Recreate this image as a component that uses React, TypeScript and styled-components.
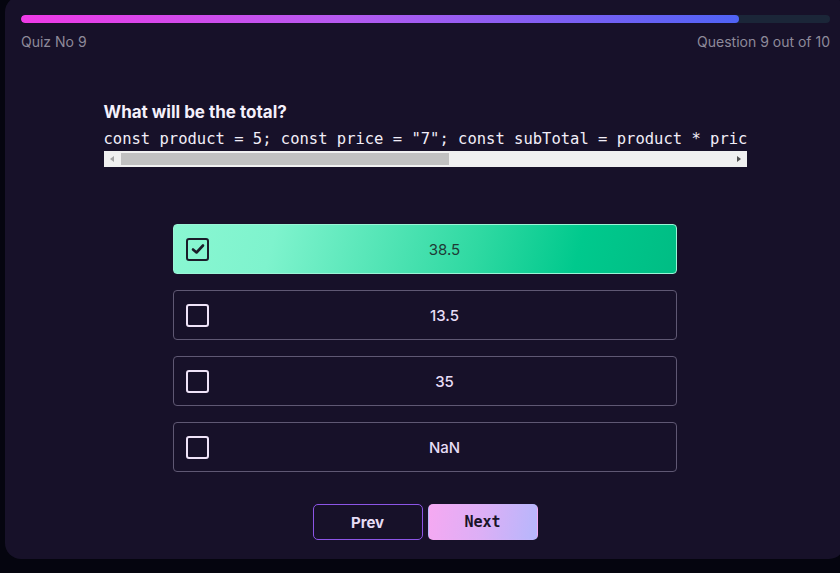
import React from "react";
import styled, { createGlobalStyle } from "styled-components";

const Global = createGlobalStyle`
  html, body { margin: 0; padding: 0; background: #05050f; overflow: hidden; }
  body { font-family: Inter, "Noto Sans", sans-serif; }
  * { box-sizing: border-box; }
`;

const Card = styled.div`
  margin-left: 5px;
  margin-top: -4px;
  width: 840px;
  height: 563px;
  background: #171129;
  border-radius: 16px;
  padding: 19px 15px 0 15px;
  display: flex;
  flex-direction: column;
  align-items: stretch;
`;

const Track = styled.div`
  height: 8px;
  margin-left: 1px;
  border-radius: 4px;
  background: #1b2638;
  overflow: hidden;
`;

const Fill = styled.div`
  height: 100%;
  border-radius: 4px;
  background: linear-gradient(90deg, #ee3ae6 0%, #b55af0 45%, #4f63f5 100%);
`;

const Header = styled.div`
  display: flex;
  justify-content: space-between;
  margin-top: 9px;
  padding-left: 1px;
  font-size: 14px;
  line-height: 20px;
  color: #8e8a9a;
`;

const Question = styled.div`
  width: 643px;
  align-self: center;
  margin-top: 50px;
`;

const Title = styled.div`
  font-size: 17px;
  font-weight: 700;
  line-height: 20px;
  color: #f4f0fb;
`;

const Code = styled.pre`
  margin: 7px 0 0 0;
  padding-bottom: 2px;
  font-family: "DejaVu Sans Mono", monospace;
  font-size: 15.5px;
  line-height: 20px;
  color: #f2eef8;
  overflow: hidden;
  white-space: pre;
`;

const ScrollBar = styled.div`
  height: 16px;
  background: #f0f0f0;
  display: flex;
  align-items: center;
`;

const Arrow = styled.div<{ $dir: "left" | "right"; $active?: boolean }>`
  width: 16px;
  height: 16px;
  flex: none;
  display: flex;
  align-items: center;
  justify-content: center;
  &::before {
    content: "";
    width: 0;
    height: 0;
    border-top: 3.5px solid transparent;
    border-bottom: 3.5px solid transparent;
    ${(p) =>
      p.$dir === "left"
        ? `border-right: 4px solid ${p.$active ? "#505050" : "#a3a3a3"};`
        : `border-left: 4px solid ${p.$active ? "#505050" : "#a3a3a3"};`}
  }
`;

const ThumbArea = styled.div`
  flex: 1;
  height: 100%;
  padding: 2px 1px;
  display: flex;
`;

const Thumb = styled.div`
  height: 100%;
  background: #c1c1c1;
`;

const Options = styled.div`
  width: 504px;
  align-self: center;
  margin-top: 57px;
  display: flex;
  flex-direction: column;
  gap: 16px;
`;

const Option = styled.div<{ $selected?: boolean }>`
  height: 50px;
  border-radius: 4px;
  border: 1px solid ${(p) => (p.$selected ? "#9af5d6" : "#5f5873")};
  background: ${(p) =>
    p.$selected
      ? "linear-gradient(105deg, #8af7d2 0%, #7ef3cd 20%, #2fd9a2 60%, #00c98d 80%, #00bd84 100%)"
      : "transparent"};
  display: grid;
  grid-template-columns: 23px 1fr;
  align-items: center;
  padding-left: 12px;
`;

const Box = styled.div<{ $selected?: boolean }>`
  width: 23px;
  height: 23px;
  border-radius: 3px;
  border: 2.5px solid ${(p) => (p.$selected ? "#1b1c2a" : "#efe3f8")};
  display: flex;
  align-items: center;
  justify-content: center;
`;

const Label = styled.div<{ $selected?: boolean }>`
  margin-left: 4px;
  text-align: center;
  font-size: 15px;
  font-weight: ${(p) => (p.$selected ? 400 : 500)};
  color: ${(p) => (p.$selected ? "#1f3b36" : "#e8ddf6")};
`;

const Buttons = styled.div`
  display: flex;
  justify-content: center;
  gap: 5px;
  margin-top: 32px;
`;

const Btn = styled.button<{ $primary?: boolean }>`
  width: 110px;
  height: 36px;
  border-radius: 5px;
  font-size: 15px;
  font-weight: 700;
  cursor: pointer;
  font-family: ${(p) => (p.$primary ? `"DejaVu Sans Mono", monospace` : `Inter, sans-serif`)};
  border: 1px solid ${(p) => (p.$primary ? "transparent" : "#8c55e6")};
  background: ${(p) =>
    p.$primary ? "linear-gradient(100deg, #f6a9f2 0%, #dcaff6 50%, #b6b7fc 100%)" : "transparent"};
  color: ${(p) => (p.$primary ? "#1a1428" : "#e6dcf5")};
`;

const options = ["38.5", "13.5", "35", "NaN"];
const code =
  'const product = 5; const price = "7"; const subTotal = product * price; const total = subTotal + 3.5; console.log(total);';

export default function App() {
  return (
    <>
      <Global />
      <Card>
        <Track>
          <Fill style={{ width: "88.8%" }} />
        </Track>
        <Header>
          <span>Quiz No 9</span>
          <span>Question 9 out of 10</span>
        </Header>
        <Question>
          <Title>What will be the total?</Title>
          <Code>{code}</Code>
          <ScrollBar>
            <Arrow $dir="left" />
            <ThumbArea>
              <Thumb style={{ width: "54%" }} />
            </ThumbArea>
            <Arrow $dir="right" $active />
          </ScrollBar>
        </Question>
        <Options>
          {options.map((o, i) => (
            <Option key={o} $selected={i === 0}>
              <Box $selected={i === 0}>
                {i === 0 && (
                  <svg width="14" height="12" viewBox="0 0 14 12">
                    <path d="M2 6.5 L5.5 9.5 L12 2.5" fill="none" stroke="#1b1c2a" strokeWidth="2.6" strokeLinecap="round" strokeLinejoin="round" />
                  </svg>
                )}
              </Box>
              <Label $selected={i === 0}>{o}</Label>
            </Option>
          ))}
        </Options>
        <Buttons>
          <Btn>Prev</Btn>
          <Btn $primary>Next</Btn>
        </Buttons>
      </Card>
    </>
  );
}
